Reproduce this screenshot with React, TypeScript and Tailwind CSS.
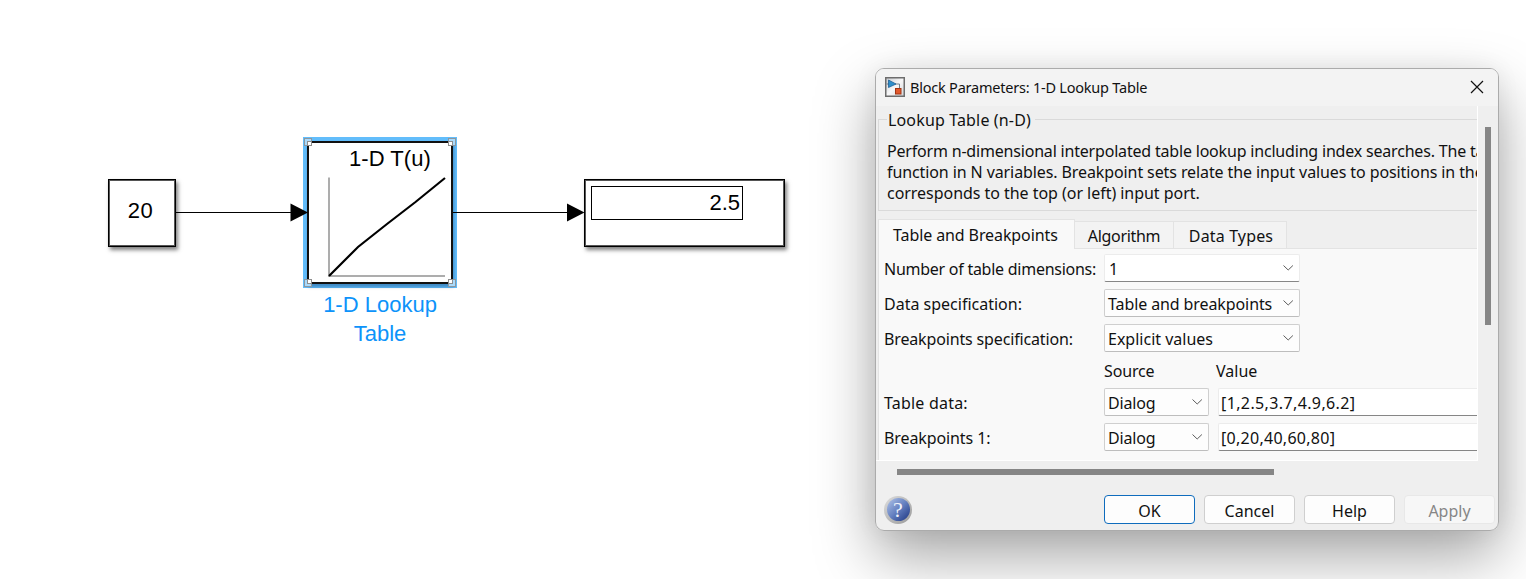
import React from "react";

function Chevron() {
  return (
    <svg className="mr-[5px] shrink-0" width="11" height="8" viewBox="1 0 11 8" fill="none" stroke="#5c5c5c" strokeWidth="1">
      <path d="M1.500 1.500 6.200 6l4.700-4.500" />
    </svg>
  );
}

function Combo({ text, width, tracking, editable }: { text: string; width: string; tracking?: string; editable?: boolean }) {
  const frame = editable
    ? "border-[#ececec] border-b-[#868686] bg-white pl-1"
    : "border-[#cfcfcf] border-b-[#bdbdbd] bg-[#fdfdfd] pl-[3px]";
  return (
    <div className={`flex h-7 shrink-0 items-center justify-between rounded-[2px] border ${frame} ${width}`}>
      <span className={`relative top-px ${tracking ?? ""}`}>{text}</span>
      <Chevron />
    </div>
  );
}

function ValueField({ text, tracking }: { text: string; tracking: string }) {
  return (
    <div className="ml-[9px] flex h-7 grow items-center rounded-l-[2px] border border-r-0 border-[#ececec] border-b-[#868686] bg-white pl-[2px]">
      <span className={`relative top-px ${tracking}`}>{text}</span>
    </div>
  );
}

function Label({ text, tracking }: { text: string; tracking: string }) {
  return (
    <div className="w-[220px] shrink-0">
      <span className={`relative top-px ${tracking}`}>{text}</span>
    </div>
  );
}

function DialogButton({ text, look }: { text: string; look: string }) {
  return (
    <button className={`flex h-[29px] w-[91px] items-center justify-center rounded-[4px] border ${look}`}>
      <span className="relative top-[2px]">{text}</span>
    </button>
  );
}

function Handle({ place, inner }: { place: string; inner: string }) {
  return (
    <div className={`absolute size-2 border border-[#8d979f] bg-[#a9dafc] ${place}`}>
      <div className={`absolute size-[5px] border border-[#8d8d8d] bg-white ${inner}`} />
    </div>
  );
}

function Diagram() {
  return (
    <div className="absolute inset-0 font-['Liberation_Sans',sans-serif] text-black">
      <div className="absolute top-[179px] left-[108px] flex h-[68px] w-[68px] items-center justify-center border border-black bg-white pr-[3px] pb-[5px] text-[22px] shadow-[inset_0_0_0_1px_#555,2px_3px_4px_rgba(0,0,0,0.5)]">
        <span className="tracking-[0.4px]">20</span>
      </div>

      <div className="absolute top-[137px] left-[303px] h-[151px] w-[154px] bg-[#62bdfb]">
        <div className="absolute top-[4px] left-[4px] h-[143px] w-[146px] border-2 border-[#111] bg-white shadow-[1px_3px_3px_rgba(0,40,90,0.35)]" />
        <div className="absolute top-[8px] left-[46px] text-[22px] leading-[27px] tracking-[0.05px] whitespace-nowrap">1-D T(u)</div>
        <svg className="absolute inset-0" width="154" height="151" viewBox="303 137 154 151" fill="none">
          <path d="M329 177.500V276H445" stroke="#adadad" strokeWidth="2" />
          <path d="M329 276 358 247 387 224 415.500 202 445 178" stroke="#000" strokeWidth="2.200" />
        </svg>
        <Handle place="top-[1px] left-[1px]" inner="bottom-[-1px] right-[-1px]" />
        <Handle place="top-[1px] right-[1px]" inner="bottom-[-1px] left-[-1px]" />
        <Handle place="bottom-[1px] left-[1px]" inner="top-[-1px] right-[-1px]" />
        <Handle place="bottom-[1px] right-[1px]" inner="top-[-1px] left-[-1px]" />
      </div>
      <div className="absolute top-[290px] left-[303px] w-[154px] text-center text-[22px] leading-[29px] text-[#0d93fa]">
        1-D Lookup
        <br />
        Table
      </div>

      <div className="absolute top-[179px] left-[584px] h-[68px] w-[201px] border border-black bg-white shadow-[inset_0_0_0_1px_#555,2px_3px_4px_rgba(0,0,0,0.5)]">
        <div className="absolute top-[6px] left-[6px] flex h-[34px] w-[152px] items-center justify-end border border-black pr-[2px] pb-[2px] text-[22px]">
          2.5
        </div>
      </div>

      <svg className="absolute inset-0" width="800" height="400" viewBox="0 0 800 400">
        <path d="M176 212.500H292M453 212.500H570" stroke="#000" strokeWidth="1" />
        <path d="M290.500 203.500v18L308 212.500ZM567 203.500v18L584.500 212.500Z" fill="#000" />
      </svg>
    </div>
  );
}

function ModelIcon() {
  return (
    <svg className="relative -top-px" width="20" height="20" viewBox="0 0 20 20">
      <defs>
        <linearGradient id="paper" x1="0" y1="0" x2="1" y2="1">
          <stop offset="0" stopColor="#c9cbcf" />
          <stop offset="0.500" stopColor="#f7f7f8" />
          <stop offset="1" stopColor="#d2d4d8" />
        </linearGradient>
      </defs>
      <rect x="0.750" y="0.750" width="18.500" height="18.500" fill="url(#paper)" stroke="#6d6d6d" strokeWidth="1.500" />
      <path d="M1.500 7H4M10 7h4.500v5" fill="none" stroke="#6f7e8a" strokeWidth="1" />
      <path d="M3.500 3 11 7 3.500 10.500Z" fill="#2f8fca" stroke="#1e5f95" strokeWidth="0.800" />
      <rect x="10.500" y="11.500" width="5.500" height="5.500" fill="#e2592c" stroke="#a33413" />
    </svg>
  );
}

function HelpIcon() {
  return (
    <div className="flex size-7 items-center justify-center rounded-full bg-linear-to-br from-[#dedede] to-[#9a9a9a]">
      <div className="flex size-[23px] items-center justify-center rounded-full bg-linear-to-br from-[#b3c5e8] via-[#6580c0] to-[#1e3480] font-['Liberation_Serif',serif] text-[22px] leading-none text-[#f1f3fa]">
        ?
      </div>
    </div>
  );
}

function Dialog() {
  return (
    <div className="absolute top-[68px] left-[875px] flex h-[463px] w-[624px] flex-col overflow-hidden rounded-[9px] border border-[#ababab] bg-[#efefef] font-['Noto_Sans',sans-serif] text-[16px] leading-[21px] whitespace-nowrap text-[#111]">
      <div className="flex h-[37px] shrink-0 items-center bg-[#f3f3f3] pl-[9px]">
        <ModelIcon />
        <span className="ml-[5px] text-[14.5px] tracking-[-0.22px]">Block Parameters: 1-D Lookup Table</span>
        <svg className="relative -top-px mr-[14px] ml-auto" width="14" height="14" viewBox="0 0 14 14" stroke="#111" strokeWidth="1.200">
          <path d="M1 1 13 13M13 1 1 13" />
        </svg>
      </div>

      <div className="flex h-[355px] shrink-0">
        <div className="flex w-[602px] shrink-0 flex-col overflow-hidden border-r border-b border-white">
          <div className="mt-[13px] ml-[2px] h-[92px] shrink-0 border border-r-0 border-[#dadada] pl-2">
            <div className="-mt-[10px]">
              <span className="inline-block bg-[#efefef] pr-1 pl-px tracking-[0.15px]">Lookup Table (n-D)</span>
            </div>
            <div className="mt-[10px]">
              <div className="tracking-[-0.19px]">Perform n-dimensional interpolated table lookup including index searches. The ta</div>
              <div className="tracking-[-0.1px]">function in N variables. Breakpoint sets relate the input values to positions in the</div>
              <div className="tracking-[-0.04px]">corresponds to the top (or left) input port.</div>
            </div>
          </div>

          <div className="mt-2 ml-[2px] flex h-[30px] shrink-0 items-end">
            <div className="flex h-[30px] w-[197px] items-center border border-b-0 border-[#e3e3e3] bg-[#f9f9f9] pl-[14px]">
              <span className="relative top-px tracking-[-0.1px]">Table and Breakpoints</span>
            </div>
            <div className="flex h-7 w-[99px] items-center justify-center border border-l-0 border-[#e3e3e3] bg-[#f3f3f3]">
              <span className="relative top-px tracking-[-0.3px]">Algorithm</span>
            </div>
            <div className="flex h-7 w-[113px] items-center justify-center border border-l-0 border-[#e3e3e3] bg-[#f3f3f3] pl-[2px]">
              <span className="relative top-px tracking-[0.15px]">Data Types</span>
            </div>
            <div className="h-7 grow border-b border-[#e3e3e3]" />
          </div>

          <div className="ml-[2px] flex grow flex-col border-l border-[#e3e3e3] bg-[#f9f9f9] pt-[5px] pl-[5px]">
            <div className="mb-[7px] flex items-center">
              <Label text="Number of table dimensions:" tracking="tracking-[-0.26px]" />
              <Combo text="1" width="w-[196px]" editable />
            </div>
            <div className="mb-[7px] flex items-center">
              <Label text="Data specification:" tracking="" />
              <Combo text="Table and breakpoints" width="w-[196px]" tracking="tracking-[-0.1px]" />
            </div>
            <div className="mb-[9px] flex items-center">
              <Label text="Breakpoints specification:" tracking="tracking-[-0.15px]" />
              <Combo text="Explicit values" width="w-[196px]" />
            </div>
            <div className="mb-[6px] flex pl-[220px]">
              <span className="w-[112px] tracking-[-0.15px]">Source</span>
              <span>Value</span>
            </div>
            <div className="mb-[7px] flex items-center">
              <Label text="Table data:" tracking="tracking-[0.2px]" />
              <Combo text="Dialog" width="w-[105px]" tracking="tracking-[-0.15px]" />
              <ValueField text="[1,2.5,3.7,4.9,6.2]" tracking="tracking-[0.38px]" />
            </div>
            <div className="flex items-center">
              <Label text="Breakpoints 1:" tracking="tracking-[-0.1px]" />
              <Combo text="Dialog" width="w-[105px]" tracking="tracking-[-0.15px]" />
              <ValueField text="[0,20,40,60,80]" tracking="tracking-[0.28px]" />
            </div>
          </div>
        </div>
        <div className="mt-[21px] ml-[7px] h-[198px] w-[6px] bg-[#868686]" />
      </div>

      <div className="mt-2 ml-[21px] h-[6px] w-[377px] shrink-0 bg-[#868686]" />

      <div className="mt-5 flex items-center pr-[3px] pl-2">
        <HelpIcon />
        <div className="ml-auto flex gap-[9px]">
          <DialogButton text="OK" look="border-[#0f6cbd] bg-[#fdfdfd]" />
          <DialogButton text="Cancel" look="border-[#cfcfcf] bg-[#fdfdfd]" />
          <DialogButton text="Help" look="border-[#cfcfcf] bg-[#fdfdfd]" />
          <DialogButton text="Apply" look="border-[#e8e8e8] bg-[#f7f7f7] text-[#868686]" />
        </div>
      </div>
    </div>
  );
}

export default function App() {
  return (
    <main className="relative h-[579px] w-[1526px] overflow-hidden bg-white">
      <Diagram />
      <div className="absolute top-[68px] left-[875px] h-[463px] w-[624px] rounded-[9px] shadow-[0_26px_60px_rgba(0,0,0,0.35),0_0_24px_rgba(0,0,0,0.06)]" />
      <Dialog />
    </main>
  );
}
